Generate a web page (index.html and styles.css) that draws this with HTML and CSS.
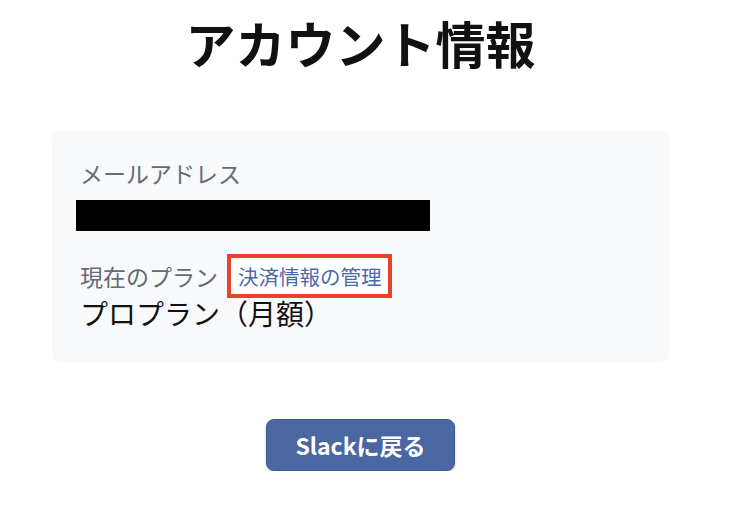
FILE: index.html
```html
<!doctype html>
<html lang="ja">
<head>
    <meta charset="utf-8">
    <title>アカウント情報</title>
    <meta name="viewport" content="width=device-width, initial-scale=1.0">
    <link rel="stylesheet" href="styles.css">
</head>
<body>
    <main class="page">
        <h1>アカウント情報</h1>
        <section class="card">
            <div class="label">メールアドレス</div>
            <div class="masked"></div>
            <div class="plan-row">
                <span class="label">現在のプラン</span>
                <a class="billing-link" href="#">決済情報の管理</a>
            </div>
            <div class="value">プロプラン（月額）</div>
        </section>
        <button class="back-btn" type="button">Slackに戻る</button>
    </main>
</body>
</html>
```

FILE: styles.css
```css
body {
    margin: 0;
    background-color: #fff;
    color: #111;
    font-family: "Noto Sans CJK JP", "Noto Sans", sans-serif;
}
.page {
    width: 721px;
    display: flex;
    flex-direction: column;
    align-items: center;
}
h1 {
    font-size: 50px;
    font-weight: 700;
    line-height: 60px;
    margin: 12px 0 0;
    color: #111;
}
.card {
    box-sizing: border-box;
    width: 617px;
    height: 233px;
    margin-top: 58px;
    padding: 26px 28px;
    background-color: #f8f9fb;
    border-radius: 10px;
    display: flex;
    flex-direction: column;
    align-items: flex-start;
}
.label {
    font-size: 23px;
    line-height: 34px;
    color: #646b78;
}
.masked {
    width: 354px;
    height: 31px;
    background-color: #000;
    margin: 10px 0 0 -4px;
}
.plan-row {
    display: flex;
    align-items: center;
    margin-top: 27px;
}
.billing-link {
    display: inline-block;
    margin-left: 13px;
    padding: 3px 6px 3px 7px;
    font-size: 20.5px;
    line-height: 30px;
    color: #4a6aa8;
    text-decoration: none;
    background-color: #fff;
    box-shadow: 0 0 0 4px #e8412c;
}
.value {
    font-size: 28px;
    line-height: 38px;
    color: #111;
}
.back-btn {
    margin-top: 56px;
    width: 189px;
    height: 52px;
    border: 1px solid #3f5b92;
    border-radius: 8px;
    background-color: #4a67a1;
    color: #fff;
    font-family: "Noto Sans CJK JP", "Noto Sans", sans-serif;
    font-size: 23px;
    font-weight: 700;
    box-shadow: 0 1px 3px rgba(0, 0, 0, 0.2);
    cursor: pointer;
}
```
